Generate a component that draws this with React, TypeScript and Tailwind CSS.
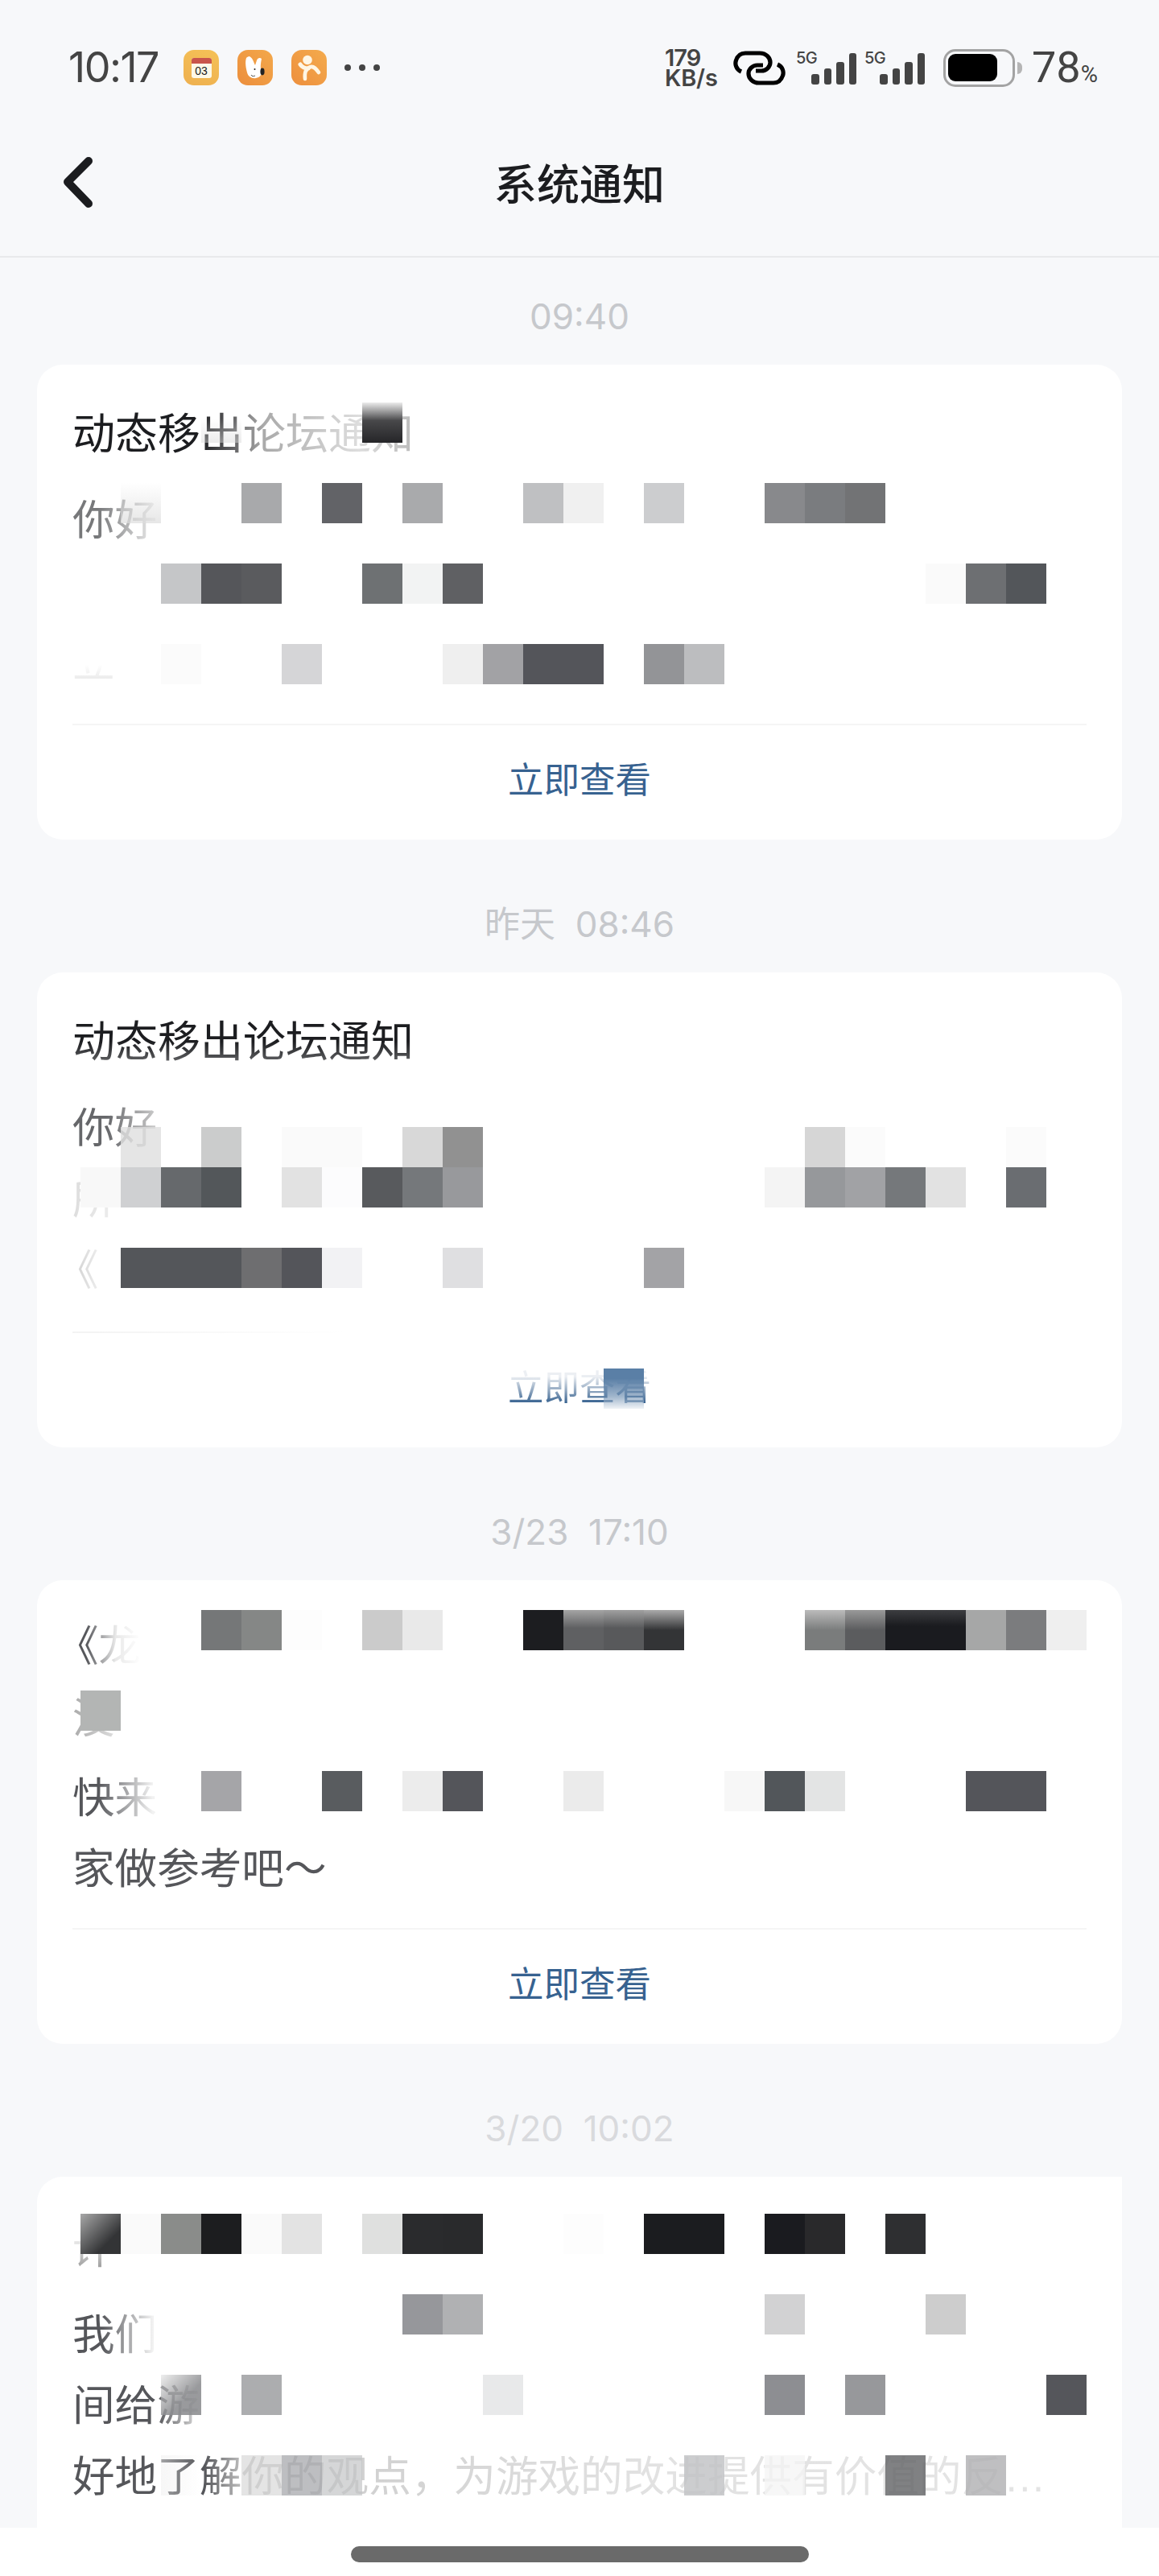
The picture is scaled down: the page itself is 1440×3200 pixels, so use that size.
import { type ReactNode } from 'react';

const cjk = "font-['Noto_Sans_CJK_SC','Noto_Sans',sans-serif]";
const latin = "font-['Roboto','Noto_Sans_CJK_SC',sans-serif]";
const inter = "font-['Inter','Noto_Sans_CJK_SC',sans-serif]";

type Row = { top: number; cells: [number, string][] };

// mosaic patches, in 50px cells: column index + fill
const patches: Row[] = [
  { top: 500, cells: [[5, 'linear-gradient(180deg,#ffffff00 40%,#d8d8d880)'], [9, 'linear-gradient(180deg,#ececec,#48484a 45%,#252528)']] },
  {
    top: 600,
    cells: [
      [3, 'linear-gradient(180deg,#ffffff00,#dcdcdcb0)'],
      [6, '#a8a9ab'], [8, '#626367'], [10, '#a9aaac'], [13, '#bfc0c2'], [14, '#f0f0f0'], [16, '#cccdcf'],
      [19, '#88898c'], [20, '#7a7c7f'], [21, '#727375'],
    ],
  },
  {
    top: 700,
    cells: [
      [4, '#c5c6c8'], [5, '#55565a'], [6, '#5a5b5e'], [9, '#6e7173'], [10, '#f2f3f3'], [11, '#5f6063'],
      [23, '#fafafa'], [24, '#6d6f72'], [25, '#53565a'],
    ],
  },
  {
    top: 800,
    cells: [
      [4, '#fbfbfb'], [7, '#d5d5d7'], [11, '#efefef'], [12, '#a2a2a5'], [13, '#54555a'], [14, '#54555a'],
      [16, '#939497'], [17, '#bcbdbf'],
    ],
  },
  {
    top: 1400,
    cells: [
      [3, '#dededecc'], [5, '#cbcccc'], [7, '#fafafa'], [8, '#fafafa'], [10, '#d8d8d8'], [11, '#919191'],
      [20, '#d6d6d6'], [21, '#fbfbfb'], [25, '#fbfbfb'],
    ],
  },
  {
    top: 1450,
    cells: [
      [2, '#f8f8f8'], [3, '#cfd0d2'], [4, '#66696c'], [5, '#53575a'], [7, '#e2e2e2'], [8, '#fcfcfd'],
      [9, '#585a5d'], [10, '#75787b'], [11, '#98999c'], [19, '#f4f4f4'], [20, '#96989b'], [21, '#a1a2a5'],
      [22, '#75787b'], [23, '#e2e2e2'], [25, '#6a6d71'],
    ],
  },
  {
    top: 1550,
    cells: [
      [3, '#54565a'], [4, '#54565a'], [5, '#54565a'], [6, '#6e6e70'], [7, '#54555a'], [8, '#f2f2f4'],
      [11, '#dfdfe1'], [16, '#a3a3a6'],
    ],
  },
  { top: 1700, cells: [[15, 'linear-gradient(180deg,#5a7fa6,#5a7fa6 25%,#5a7fa690 70%,#e8edf2b0)']] },
  {
    top: 2000,
    cells: [
      [5, '#757778'], [6, '#858786'], [7, '#fdfdfd'], [9, '#cbcbcb'], [10, '#e9e9e9'], [13, '#1c1d20'],
      [14, 'linear-gradient(180deg,#a4a4a4,#5f6062 45%)'], [15, 'linear-gradient(180deg,#a0a0a0,#58595b 45%)'],
      [16, 'linear-gradient(180deg,#aaaaaa,#333436 50%)'], [20, 'linear-gradient(180deg,#bbbbbb,#7a7c7c 50%)'],
      [21, 'linear-gradient(180deg,#999999,#5b5c5e 50%)'], [22, 'linear-gradient(180deg,#3c3d40,#1a1b1f 40%)'],
      [23, 'linear-gradient(180deg,#3c3d40,#1a1b1f 40%)'], [24, '#a6a7a7'], [25, '#7b7c7e'], [26, '#efefef'],
    ],
  },
  { top: 2100, cells: [[2, '#b3b5b4']] },
  {
    top: 2200,
    cells: [
      [5, '#a5a5a8'], [8, '#595c5f'], [10, '#ececec'], [11, '#54555a'], [14, '#ebebeb'], [18, '#f7f7f7'],
      [19, '#52565a'], [20, '#e3e4e4'], [24, '#54555a'], [25, '#54555a'],
    ],
  },
  {
    top: 2750,
    cells: [
      [2, 'linear-gradient(135deg,#a8a8a8,#333436 70%)'], [3, '#fafafa'], [4, '#8a8c8a'], [5, '#1c1d1f'],
      [6, '#fafafa'], [7, '#e3e3e3'], [9, '#dfe0df'], [10, '#2a2b2d'], [11, '#292a2c'], [14, '#fdfdfd'],
      [16, '#1b1c1f'], [17, '#1b1c1f'], [19, '#1a1b1f'], [20, '#29292b'], [22, '#2e2f31'],
    ],
  },
  { top: 2850, cells: [[10, '#96979b'], [11, '#b0b1b3'], [19, '#d2d2d3'], [23, '#cdcdcd']] },
  {
    top: 2950,
    cells: [
      [4, 'linear-gradient(135deg,#dddddd80,#8b8c8fe0 60%)'], [6, '#acadaf'], [12, '#e8e9ea'], [19, '#8d8e92'],
      [21, '#97989b'], [26, '#55565b'],
    ],
  },
  {
    top: 3050,
    cells: [
      [4, 'linear-gradient(90deg,#eeeeee80,#ffffff00)'], [6, '#d8d8d8b0'], [7, '#a8a9acc0'], [8, '#c2c3c5b0'],
      [17, '#c1c2c4d0'], [19, '#f4f4f4c0'], [22, '#636467d0'], [24, '#b0b1b3d0'],
    ],
  },
];

function Mosaic() {
  return (
    <div className="absolute inset-0">
      {patches.flatMap((row) =>
        row.cells.map(([col, fill]) => (
          <div
            key={`${row.top}-${col}`}
            className="absolute h-[50px] w-[50px]"
            style={{ left: col * 50, top: row.top, background: fill }}
          />
        )),
      )}
    </div>
  );
}

function CalendarIcon() {
  return (
    <div className="flex h-[44px] w-[44px] items-center justify-center rounded-[13px] bg-[linear-gradient(200deg,#f5c157,#eeb04f)]">
      <div className="flex h-[25px] w-[25px] flex-col overflow-hidden rounded-[3px] bg-[#fdf8e8]">
        <div className="h-[7px] bg-[#c9544b]" />
        <div className="flex flex-1 items-center justify-center font-['Liberation_Sans',sans-serif] text-[14px] leading-none text-[#222]">
          03
        </div>
      </div>
    </div>
  );
}

function DogIcon() {
  return (
    <svg width="44" height="44" viewBox="0 0 44 44">
      <defs>
        <linearGradient id="dogBg" x1="1" y1="0" x2="0" y2="1">
          <stop offset="0" stopColor="#f3a84b" />
          <stop offset="1" stopColor="#ec8e3c" />
        </linearGradient>
      </defs>
      <rect width="44" height="44" rx="13" fill="url(#dogBg)" />
      <path
        d="M11 10C9 16 11 24 12 28C13 33 18 36 23 35C28 34 30 31 30 28C28 22 29 16 30 11C28 9 25 10 24 13L22 19C20 15 19 10 15 8C13 8 12 9 11 10Z"
        fill="#fff"
      />
      <ellipse cx="31" cy="27" rx="2.6" ry="4.4" fill="#222" />
      <circle cx="21.5" cy="24" r="1" fill="#222" />
      <path d="M17 31C18 33 20 33 22 32" stroke="#222" strokeWidth="0.8" fill="none" />
    </svg>
  );
}

function RunnerIcon() {
  return (
    <svg width="44" height="44" viewBox="0 0 44 44">
      <defs>
        <linearGradient id="runnerBg" x1="1" y1="0" x2="0" y2="1">
          <stop offset="0" stopColor="#f4ab4d" />
          <stop offset="1" stopColor="#ed8f3d" />
        </linearGradient>
      </defs>
      <rect width="44" height="44" rx="13" fill="url(#runnerBg)" />
      <circle cx="20" cy="12.5" r="5.8" fill="#fff6e4" />
      <path d="M11 18C13 21 17 23 21 23" stroke="#fff6e4" strokeWidth="5" fill="none" strokeLinecap="round" />
      <path d="M17 36C16 28 18 23 24 21C28 20 31 24 34 28" stroke="#fff6e4" strokeWidth="4.6" fill="none" strokeLinecap="round" />
    </svg>
  );
}

function LinkIcon() {
  const d = 'M10 27C3 24 2 17 3.5 13C5.5 7 10 4 15 4L33 4C41 4 46 10 46 15.5C46 21 41 26 35 26L28 26';
  return (
    <svg width="65" height="44" viewBox="0 0 65 44" fill="none" stroke="#000" strokeWidth="5.2">
      <path d={d} />
      <path d={d} transform="rotate(180 32.5 22.5)" />
    </svg>
  );
}

function Signal() {
  return (
    <div className="flex h-[44px] items-end">
      <span className={`${inter} -mr-[7px] mb-[24px] w-[26px] text-[20px] leading-none font-medium tracking-[-0.5px] text-[#444]`}>5G</span>
      <div className="flex items-end gap-[6px] pb-[1px]">
        <div className="h-[13px] w-[9.5px] rounded-[3px] bg-[#444]" />
        <div className="h-[20px] w-[9.5px] rounded-[3px] bg-[#444]" />
        <div className="h-[28px] w-[9.5px] rounded-[3px] bg-[#444]" />
        <div className="h-[39px] w-[9.5px] rounded-[3px] bg-[#444]" />
      </div>
    </div>
  );
}

function StatusBar() {
  return (
    <div className="flex h-[140px] items-center justify-between pt-[28px] pr-[76px] pl-[85px] text-[#444]">
      <div className="flex items-center">
        <span className={`${inter} w-[115px] text-[52px] leading-none tracking-[-1.5px]`}>10:17</span>
        <div className="ml-[28px] flex items-center gap-[23px]">
          <CalendarIcon />
          <DogIcon />
          <RunnerIcon />
        </div>
        <div className="ml-[22px] flex items-center gap-[10px]">
          <span className="h-[8px] w-[8px] rounded-full bg-[#444]" />
          <span className="h-[8px] w-[8px] rounded-full bg-[#444]" />
          <span className="h-[8px] w-[8px] rounded-full bg-[#444]" />
        </div>
      </div>
      <div className="flex items-center">
        <div className={`${inter} flex w-[70px] flex-col text-[29px] leading-[25px] font-semibold tracking-[-1px]`}>
          <span>179</span>
          <span className="text-[29px] tracking-[-0.2px]">KB/s</span>
        </div>
        <div className="ml-[15px]">
          <LinkIcon />
        </div>
        <div className="ml-[13px] flex items-center gap-[10px]">
          <Signal />
          <Signal />
        </div>
        <div className="ml-[23px] flex items-center gap-[3px]">
          <div className="flex h-[47px] w-[89px] items-center rounded-[15px] border-[3px] border-[#a3a3a3] pl-[3px]">
            <div className="h-[34px] w-[61px] rounded-[9px] bg-black" />
          </div>
          <div className="h-[15px] w-[6px] rounded-r-full bg-[#b5b5b5]" />
        </div>
        <div className={`${latin} ml-[12px] flex w-[82px] items-baseline`}>
          <span className="text-[54px] leading-none">78</span>
          <span className="text-[29px] leading-none">%</span>
        </div>
      </div>
    </div>
  );
}

function NavBar() {
  return (
    <div className="grid h-[180px] grid-cols-3 items-center border-b-2 border-[#e8e9eb] pb-[6px]">
      <div className="pl-[79px]">
        <svg width="36" height="63" viewBox="0 0 36 63" fill="none" stroke="#1b1c1f" strokeWidth="10" strokeLinecap="round" strokeLinejoin="round">
          <path d="M31 5L5 31L31 58" />
        </svg>
      </div>
      <h1 className={`${cjk} text-center text-[53px] leading-none font-medium text-[#1c1d20]`}>系统通知</h1>
    </div>
  );
}

function DateLabel({ children, className }: { children: ReactNode; className?: string }) {
  return (
    <div
      className={`${inter} flex h-[120px] items-start justify-center pt-[32px] text-[44px] leading-[56px] whitespace-pre ${className ?? 'text-[#c6c8cc]'}`}
    >
      {children}
    </div>
  );
}

function Line({ children, fade }: { children: ReactNode; fade?: string }) {
  return (
    <p className={`${cjk} h-[88px] text-[52.6px] leading-[88px] whitespace-nowrap text-[#55565a]`}>
      {fade ? <span className={`bg-clip-text text-transparent ${fade}`}>{children}</span> : children}
    </p>
  );
}

function CardTitle({ children, fade }: { children: ReactNode; fade: string }) {
  return (
    <h2 className={`${cjk} text-[53px] leading-[60px]`}>
      <span className={`bg-clip-text text-transparent ${fade}`}>{children}</span>
    </h2>
  );
}

function ViewButton({ fade, h = 'pb-[12px]' }: { fade?: string; h?: string }) {
  return (
    <div className={`${cjk} flex h-[142px] items-center justify-center text-[44.5px] leading-none text-[#376290] ${h}`}>
      {fade ? <span className={`bg-clip-text text-transparent ${fade}`}>立即查看</span> : '立即查看'}
    </div>
  );
}

export default function App() {
  return (
    <div className="relative h-[3200px] w-[1440px] overflow-hidden bg-[#f7f8fa]">
      <StatusBar />
      <NavBar />

      <main className="flex flex-col gap-[45px] px-[46px] pt-[13px]">
        <section>
          <DateLabel>09:40</DateLabel>
          <article className="rounded-[32px] bg-white px-[44px] pt-[52px]">
            <CardTitle fade="bg-[linear-gradient(90deg,#1c1d20_37%,#5a5a5c_46%,#aaaaaa_56%,#dddddd_84%,#bbbbbb_100%)]">动态移出论坛通知</CardTitle>
            <div className="mt-[33px]">
              <Line fade="bg-[linear-gradient(90deg,#77787a_30%,#e8e8e8_95%)]">你好</Line>
              <Line> </Line>
              <Line fade="bg-[linear-gradient(180deg,#ffffff_60%,#dddddd)]">立</Line>
            </div>
            <div className="mt-[37px] h-[2px] bg-[#f5f5f5]" />
            <ViewButton />
          </article>
        </section>

        <section>
          <DateLabel>昨天  08:46</DateLabel>
          <article className="rounded-[32px] bg-white px-[44px] pt-[52px]">
            <CardTitle fade="bg-[linear-gradient(180deg,#1c1d20_55%,#77787a)]">动态移出论坛通知</CardTitle>
            <div className="mt-[33px]">
              <Line fade="bg-[linear-gradient(90deg,#66676a_40%,#cccccc)]">你好</Line>
              <Line fade="bg-[linear-gradient(90deg,#dddddd,#eeeeee)]">所</Line>
              <Line fade="-ml-[20px] inline-block bg-[linear-gradient(90deg,#bbbbbb,#eeeeee)]">《</Line>
            </div>
            <div className="mt-[37px] h-[2px] bg-[linear-gradient(90deg,#f3f3f3,#ffffff_27%)]" />
            <ViewButton fade="bg-[linear-gradient(180deg,#eceff3_25%,#8fa6bf_65%,#376290)]" />
          </article>
        </section>

        <section>
          <DateLabel>3/23  17:10</DateLabel>
          <article className="rounded-[32px] bg-white px-[44px] pt-[32px]">
            <div className="[&>p]:h-[90px] [&>p]:leading-[90px]">
              <Line fade="-ml-[20px] inline-block bg-[linear-gradient(90deg,#55565a_35%,#e8e8e8_70%,#ffffff)]">《龙</Line>
              <Line fade="bg-[linear-gradient(90deg,#aaaaaa,#dddddd)]">没</Line>
            </div>
            <div className="mt-[10px]">
              <Line fade="bg-[linear-gradient(90deg,#55565a_30%,#f2f2f2_95%)]">快来</Line>
              <Line>家做参考吧～</Line>
            </div>
            <div className="mt-[34px] h-[2px] bg-[#f5f5f5]" />
            <ViewButton h="pb-[12px]" />
          </article>
        </section>

        <section>
          <DateLabel className="text-[#d9dadd]">3/20  10:02</DateLabel>
          <article className="h-[600px] rounded-tl-[32px] bg-white px-[44px] pt-[55px]">
            <CardTitle fade="bg-[linear-gradient(180deg,#ffffff_30%,#888888)]">评</CardTitle>
            <div className="mt-[33px]">
              <Line fade="bg-[linear-gradient(90deg,#55565a_35%,#f2f2f2_95%)]">我们</Line>
              <Line fade="bg-[linear-gradient(90deg,#55565a_66%,#dddddd)]">间给游</Line>
              <Line fade="bg-[linear-gradient(90deg,#55565a_13.5%,#b5b5b5_17%,#d0d0d0_28%,#e2e2e2_60%,#e4e4e4_100%)]">
                好地了解你的观点，为游戏的改进提供有价值的反
                <span className="font-['Liberation_Sans',sans-serif]">…</span>
              </Line>
            </div>
          </article>
        </section>
      </main>

      <Mosaic />

      <div className="absolute inset-x-0 bottom-0 flex h-[60px] justify-center bg-white pt-[23px]">
        <div className="h-[20px] w-[569px] rounded-full bg-[#6a6a6a]" />
      </div>
    </div>
  );
}
